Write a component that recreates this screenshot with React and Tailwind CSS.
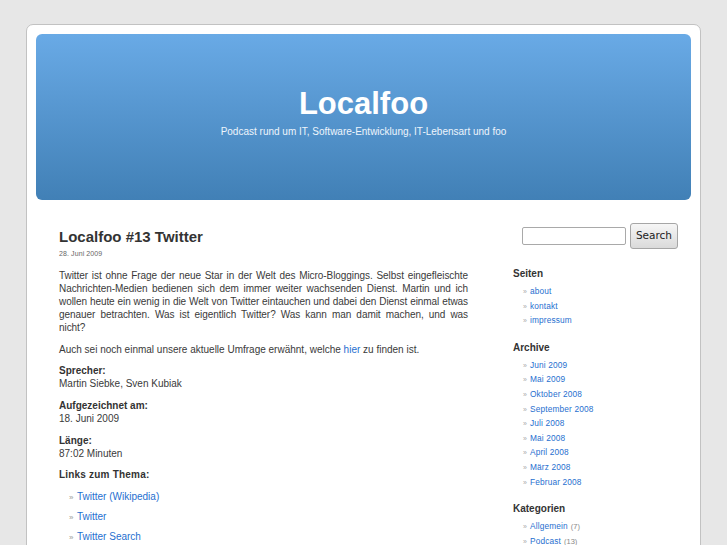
import React from "react";

const font = { fontFamily: '"Liberation Sans", Arial, sans-serif' };

function SideList({ items }) {
  return (
    <ul className="ml-[10px]">
      {items.map((it, i) => (
        <li key={i} className="block h-[14.6px] leading-[14.6px] text-[8.3px] whitespace-nowrap">
          <span className="inline-block text-[#aaa] text-[7px] w-[7px] leading-[0]">»</span>
          <a className="text-[#1f6fcf] tracking-[0.15px]">{it.t}</a>
          {it.c && <span className="ml-[3px] text-[#888] text-[7.5px] leading-[0]">{it.c}</span>}
        </li>
      ))}
    </ul>
  );
}

export default function App() {
  const archive = [
    "Juni 2009",
    "Mai 2009",
    "Oktober 2008",
    "September 2008",
    "Juli 2008",
    "Mai 2008",
    "April 2008",
    "März 2008",
    "Februar 2008",
  ];
  return (
    <div className="min-h-screen bg-[#e7e7e7] pt-[24px] overflow-hidden" style={font}>
      <div className="mx-auto w-[675px] h-[560px] bg-white border border-[#c2c2c2] rounded-[7px] px-[9px] pt-[9px]">
        <header className="h-[166px] rounded-[6px] bg-gradient-to-b from-[#69aae6] to-[#4180b6] flex flex-col items-center text-white">
          <h1 className="mt-[51px] text-[31px] font-bold leading-[38px]">Localfoo</h1>
          <p className="mt-[3px] text-[10px] leading-[12px] text-[#eef5fc]">
            Podcast rund um IT, Software-Entwicklung, IT-Lebensart und foo
          </p>
        </header>
        <div className="flex">
          <main className="ml-[23px] w-[409px] pt-[28px] text-[#3a3a3a]">
            <h2 className="text-[15px] font-bold leading-[18px] text-[#333]">Localfoo #13 Twitter</h2>
            <div className="mt-[3px] text-[7px] leading-[10px] text-[#666] tracking-[0.1px]">28. Juni 2009</div>
            <div className="mt-[9.5px] text-[10px] leading-[13px]">
              <div className="mb-[9px] tracking-[-0.06px]">
                <span className="block text-justify [text-align-last:justify]">
                  Twitter ist ohne Frage der neue Star in der Welt des Micro-Bloggings. Selbst eingefleischte
                  Nachrichten-Medien bedienen sich dem immer weiter wachsenden Dienst. Martin und ich wollen heute
                  ein wenig in die Welt von Twitter eintauchen und dabei den Dienst einmal etwas genauer betrachten.
                  Was ist eigentlich Twitter? Was kann man damit machen, und was
                </span>
                <span className="block">nicht?</span>
              </div>
              <p className="mb-[8.7px]">
                Auch sei noch einmal unsere aktuelle Umfrage erwähnt, welche{" "}
                <a className="text-[#1f6fcf]">hier</a> zu finden ist.
              </p>
              <p className="mb-[8.7px]">
                <strong className="text-[#333]">Sprecher:</strong>
                <br />
                Martin Siebke, Sven Kubiak
              </p>
              <p className="mb-[8.7px]">
                <strong className="text-[#333]">Aufgezeichnet am:</strong>
                <br />
                18. Juni 2009
              </p>
              <p className="mb-[8.7px]">
                <strong className="text-[#333]">Länge:</strong>
                <br />
                87:02 Minuten
              </p>
              <p className="mb-[9px]">
                <strong className="text-[#333] tracking-[0.2px]">Links zum Thema:</strong>
              </p>
              <ul className="ml-[10px]">
                {["Twitter (Wikipedia)", "Twitter", "Twitter Search"].map((t) => (
                  <li key={t} className="block h-[13px] leading-[13px] mb-[7px] whitespace-nowrap">
                    <span className="inline-block text-[#999] text-[8px] w-[8px] leading-[0]">»</span>
                    <a className="text-[#1f6fcf]">{t}</a>
                  </li>
                ))}
              </ul>
            </div>
          </main>
          <aside className="ml-[45px] w-[165px] pt-[23px] text-[#333]">
            <div className="flex items-center ml-[9px]">
              <input
                type="text"
                className="w-[104px] h-[18px] border border-[#a9a9a9] rounded-[2px] bg-white"
              />
              <button
                className="ml-[4px] w-[48px] h-[26px] border border-[#a6a6a6] rounded-[3px] bg-gradient-to-b from-[#f6f6f6] to-[#dadada] text-[10.5px] text-[#222] flex items-center justify-center"
                style={{ fontFamily: '"DejaVu Sans", sans-serif' }}
              >
                Search
              </button>
            </div>
            <h3 className="mt-[18px] text-[10px] font-bold leading-[13px]">Seiten</h3>
            <div className="mt-[4px]">
              <SideList items={[{ t: "about" }, { t: "kontakt" }, { t: "impressum" }]} />
            </div>
            <h3 className="mt-[13px] text-[10px] font-bold leading-[13px]">Archive</h3>
            <div className="mt-[4px]">
              <SideList items={archive.map((t) => ({ t }))} />
            </div>
            <h3 className="mt-[13px] text-[10px] font-bold leading-[13px]">Kategorien</h3>
            <div className="mt-[4px]">
              <SideList items={[{ t: "Allgemein", c: "(7)" }, { t: "Podcast", c: "(13)" }]} />
            </div>
          </aside>
        </div>
      </div>
    </div>
  );
}
